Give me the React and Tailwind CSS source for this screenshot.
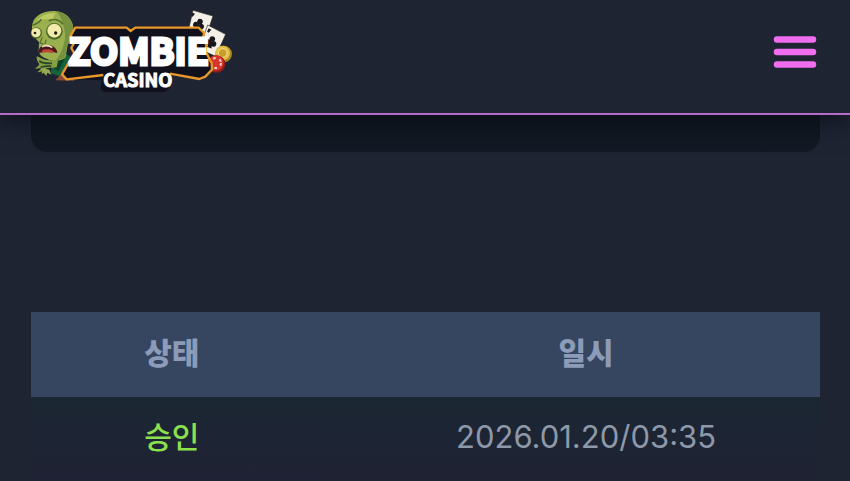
import React, { useState } from "react";

const ROWS = [{ id: 1, status: "승인", date: "2026.01.20/03:35" }];

function Club({ x, y, size }) {
  return (
    <g transform={`translate(${x} ${y}) rotate(20) scale(${size})`} fill="#17161c">
      <circle cx="0" cy="-8" r="8" />
      <circle cx="-8" cy="4" r="8" />
      <circle cx="8" cy="4" r="8" />
      <path d="M-3 0h6l4 18h-14z" />
    </g>
  );
}

function Logo() {
  return (
    <svg viewBox="30 20 612 270" className="h-[90px] w-[204px]" role="img" aria-label="Zombie Casino">
      {/* cards */}
      <g stroke="#2c2522" strokeWidth="2">
        <path d="M519 30l60 17-24 72-52-20z" fill="#f4efe7" />
        <path d="M563 74l54 28-30 66-50-22z" fill="#f4efe7" />
      </g>
      <Club x={537} y={72} size={1.05} />
      <Club x={574} y={124} size={1.05} />
      <g fill="#17161c">
        <path d="M518 37l7 3-7 9-5-2z" />
        <path d="M566 84l8 4-8 9-5-3z" />
      </g>

      {/* chips */}
      <circle cx="611" cy="161" r="25" fill="#a98520" />
      <circle cx="608" cy="158" r="22" fill="#e2bf45" />
      <circle cx="608" cy="158" r="13" fill="#c99c2c" stroke="#f6e28c" strokeWidth="3" />
      <circle cx="590" cy="191" r="26" fill="#8e1c1c" />
      <circle cx="588" cy="188" r="23" fill="#d8352c" />
      <circle cx="588" cy="188" r="15" fill="none" stroke="#f5d9cf" strokeWidth="6" strokeDasharray="8 12" />

      {/* body and arm */}
      <path d="M100 178l38-18 30 20-34 54-42-16z" fill="#14643a" />
      <path d="M122 168l16-2-22 46-14-6z" fill="#0c4229" />
      <path d="M50 168c12 4 20 10 30 11l34 3-4 19-30 3c-10 8-17 12-28 12 8-6 10-10 12-15-8 5-14 5-20 3 8-3 12-8 14-13-6-7-9-14-8-23z" fill="#86a043" />
      <path d="M58 182c8 6 20 8 38 7M62 200c10-2 20-4 32-2" fill="none" stroke="#2b4426" strokeWidth="5" />
      <path d="M68 203l20 5 6 15-12-6-3 10-8-10-6 4z" fill="#93ab4e" />

      {/* head */}
      <path d="M36 78C38 48 68 31 103 32c35 1 58 27 57 57-1 19-8 34-17 44l-6 37c-8 12-38 15-54 7-13-5-23-11-27-23l1-29C42 112 35 98 36 78z" fill="#9ab04f" />
      <path d="M108 33c32 3 53 27 51 55-1 19-8 34-17 44l-6 36c-5 8-16 11-28 12 20-26 34-68 24-98-4-20-12-38-24-49z" fill="#76923f" />
      <path d="M50 62c12-16 34-25 57-24-7 7-9 15-1 22-18-5-37-4-56 2z" fill="#bccb62" />
      <path d="M40 74c9-3 18-8 23-16M88 61c13-7 30-3 40 9" fill="none" stroke="#526c2a" strokeWidth="5" strokeLinecap="round" />
      <circle cx="49" cy="98" r="17" fill="#4d652b" />
      <circle cx="48" cy="97" r="14" fill="#f1eca9" />
      <circle cx="103" cy="93" r="25" fill="#4d652b" />
      <circle cx="103" cy="91" r="21" fill="#f1eca9" />
      <circle cx="45" cy="98" r="4" fill="#211c16" />
      <circle cx="107" cy="98" r="5" fill="#211c16" />
      <path d="M67 110l-7 18 11 3M78 118l-3 13" fill="none" stroke="#5b752f" strokeWidth="4" />
      <path d="M57 158c-3-15 7-25 25-24 17 0 29 10 30 24-18-6-36-6-55 0z" fill="#4b1618" />
      <path d="M65 151c9-6 26-6 36 1l-4 7c-11-4-21-4-31-1z" fill="#ba4538" />
      <path d="M66 139c11-5 22-4 31 3" fill="none" stroke="#e9dfc0" strokeWidth="5" />
      <path d="M106 240l18-19 42 8-4 12z" fill="#8b4b36" />

      {/* plate */}
      <path
        d="M164 81h156l12 8 14-8h190l17 17-5 25 13 9-5 18 21 40 2 20-23 21-20 7-84-16-6 44-12 9H252l-10-9 4-26-111-4-11-16 29-49 10-16-10-12 9-15-9-17z"
        fill="#10111d"
      />
      <path
        d="M250 224l-110 13-14-15 27-47 10-16-9-16 9-17-11-20 14-24h154l12 10 14-10h190l16 16-4 26 12 8-4 19 19 38 1 19-20 21-18 7-88-16"
        fill="none"
        stroke="#e99729"
        strokeWidth="7"
        strokeLinejoin="round"
      />
      <g
        fontFamily="'Noto Sans CJK KR', sans-serif"
        fontWeight="700"
        fill="#ffffff"
        stroke="#ffffff"
        strokeLinejoin="miter"
      >
        <text x="145" y="195" fontSize="110" strokeWidth="9">ZOMBIE</text>
        <text x="250" y="260" fontSize="55" strokeWidth="3">CASINO</text>
      </g>
    </svg>
  );
}

function Header() {
  const [open, setOpen] = useState(false);

  return (
    <header className="relative z-10 flex items-center justify-between border-b-2 border-[#b56bc9] bg-[#1f2433] px-[30px] pt-[7px] pb-4 shadow-[0_4px_24px_#0b0f1a]">
      <a href="#home">
        <Logo />
      </a>
      <button type="button" aria-label="Menu" aria-expanded={open} onClick={() => setOpen((v) => !v)} className="mr-[3px]">
        <svg viewBox="0 0 44 32" className="h-8 w-11" stroke="#f06df0" strokeWidth="6.5" strokeLinecap="round">
          <path d="M4 3.5h36M4 16h36M4 28.5h36" />
        </svg>
      </button>
    </header>
  );
}

export default function App() {
  return (
    <div className="min-h-screen overflow-hidden bg-[#1f2433] font-['Inter','Noto_Sans_CJK_KR',sans-serif]">
      <Header />
      <main className="pr-[30px] pl-[31px]">
        <div className="h-[37px] rounded-b-2xl bg-linear-to-b from-[#0d141c] to-[#131a25]" />
        <div className="mt-40 overflow-hidden">
          <table className="w-[105%] table-fixed text-center text-[31px] leading-9">
            <thead>
              <tr className="bg-[#364560] text-[30px] text-[#8b9bb8]">
                <th scope="col" className="w-[34%] pt-[23px] pb-[26px] font-black">상태</th>
                <th scope="col" className="w-[66%] pt-[23px] pb-[26px] font-black">일시</th>
              </tr>
            </thead>
            <tbody>
              {ROWS.map((row) => (
                <tr key={row.id} className="bg-linear-to-b from-[#1b2733] to-[#1f2234]">
                  <td className="pt-[22px] pb-6 text-[30px] font-medium text-[#8be04e]">{row.status}</td>
                  <td className="pt-[22px] pb-6 text-[#8d98a8]">{row.date}</td>
                </tr>
              ))}
            </tbody>
          </table>
        </div>
      </main>
    </div>
  );
}
